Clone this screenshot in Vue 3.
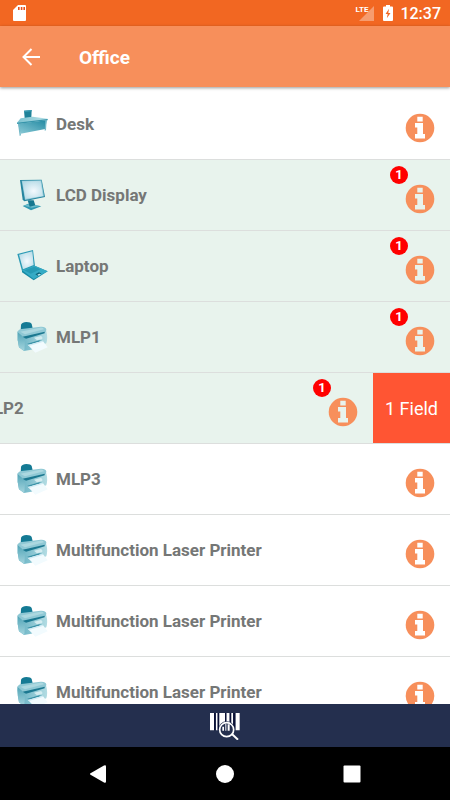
<template>
  <div class="screen">
    <!-- Status bar -->
    <div class="status-bar">
      <svg class="sd-icon" viewBox="0 0 13 16" aria-hidden="true">
        <path d="M5 0h7q1 0 1 1v14q0 1-1 1H1q-1 0-1-1V5z" fill="#fff" />
        <path d="M5 2h1.6v3H5zM7.8 2h1.6v3H7.8zM10.4 2H12v3h-1.6z" fill="#e8501c" />
      </svg>
      <div class="status-right">
        <div class="signal">
          <span class="lte">LTE</span>
          <svg viewBox="0 0 15 15" aria-hidden="true"><path d="M15 0v15H0z" fill="#fff" opacity=".35" /></svg>
        </div>
        <svg class="battery" viewBox="0 0 10 16" aria-hidden="true">
          <path d="M3 0h4v1.5h2q1 0 1 1V15q0 1-1 1H1q-1 0-1-1V2.5q0-1 1-1h2z" fill="#fff" />
          <path d="M6 3.8 2.6 9h2.1l-.9 4.2L7.5 7.9H5.3z" fill="#f26722" />
        </svg>
        <time class="clock">12:37</time>
      </div>
    </div>

    <!-- App bar -->
    <header class="app-bar">
      <button class="back" type="button" aria-label="Back">
        <svg viewBox="0 0 18 18"><path d="M9.5 1 1.5 9l8 8M1.5 9H18" fill="none" stroke="#fff" stroke-width="2" /></svg>
      </button>
      <h1>Office</h1>
    </header>

    <!-- Item list -->
    <ul class="list">
      <li v-for="item in items" :key="item.id" class="row" :class="{ changed: item.count }">
        <div class="row-content">
          <svg v-if="item.icon === 'desk'" class="thumb" viewBox="0 0 96 96" aria-hidden="true">
            <path d="M24 8 47 6 46 29 26 30z" fill="#1f8299" />
            <path d="M24 8 47 6v4L25 12z" fill="#3d9db3" />
            <path d="M3 44 14 31 50 26 95 32 93 37 4 48z" fill="url(#g-lid)" />
            <path d="M6 47 92 37 88 63 14 77z" fill="url(#g-front)" />
            <path d="M3 44 95 33v4L4 48z" fill="#3795ab" />
            <path d="M6 47h4l5 35-4 2zM88 37h4l-2 30-4 1z" fill="#74b9c8" />
          </svg>
          <svg v-else-if="item.icon === 'monitor'" class="thumb" viewBox="0 0 96 96" aria-hidden="true">
            <path d="M20 81 37 74 76 82 45 94z" fill="#2f98b0" />
            <path d="M24 80 40 75 72 81 47 86z" fill="#6dbccb" />
            <path d="M35 64h18l5 15-17 4z" fill="#16778f" />
            <path d="M12 3 77 2 87 54 25 67 20 62z" fill="#2685a0" />
            <path d="M17 5 76 4 84 52 27 63z" fill="#8cc8d6" />
            <path d="M19 7 74 6 81 51 28 60z" fill="url(#g-screen)" />
          </svg>
          <svg v-else-if="item.icon === 'laptop'" class="thumb" viewBox="0 0 96 96" aria-hidden="true">
            <path d="M4 12 51 0 57 47 18 63z" fill="#2a9ab5" />
            <path d="M9 14 49 4 53 45 21 58z" fill="url(#g-screen)" />
            <path d="M18 61 56 47 95 64 53 91 18 67z" fill="#158aa4" />
            <path d="M18 61 56 47 95 64 53 87z" fill="#35abc5" />
            <path d="M25 61 55 50 74 58 44 71z" fill="#259ab4" />
            <path d="M58 73 69 67 76 71 65 77z" fill="#0b6479" />
            <path d="M64 74 70 71 75 73 68 77z" fill="#bde6ed" />
          </svg>
          <svg v-else class="thumb" viewBox="0 0 96 96" aria-hidden="true">
            <path d="M14 29 15 11q4-8 16-8 14 0 16 6l4 17-24 8z" fill="#147a94" />
            <path d="M5 32 30 45 91 31q5 20 0 36L46 86 24 90 9 79q-6-24-4-47z" fill="url(#g-body)" />
            <path d="M5 32 28 46 25 90 9 79q-6-24-4-47z" fill="url(#g-side)" />
            <path d="M4 32Q8 25 17 24L74 17q15-1 17 8L90 32 22 48z" fill="#8fc8d4" />
            <path d="M13 32 72 20q10-1 12 5L27 40z" fill="#acd8e0" />
            <path d="M20 47 86 32v5L30 53z" fill="#1b7890" />
            <path d="M54 50 75 45q6 3 4 9L63 58z" fill="#d3ecf0" />
            <path d="M34 68 70 58 78 60 42 73z" fill="#3a93a8" />
            <path d="M36 72 80 59 95 79 58 95z" fill="#f2fbfe" />
            <path d="M36 72 80 59 82 62 39 75z" fill="#cfeaf3" />
          </svg>
          <span class="name">{{ item.name }}</span>
          <button class="info" type="button" :aria-label="'Info about ' + item.name">
            <svg viewBox="0 0 28 28">
              <circle cx="14" cy="14" r="14.3" fill="#f78f5b" />
              <path d="M11.3 2.8h5.4v4.600h-5.400zM9 9h8v11h2v4.500H9V20h2.300v-6.500H9z" class="info-glyph" />
            </svg>
            <span v-if="item.count" class="badge">{{ item.count }}</span>
          </button>
        </div>
        <button v-if="item.open" class="field-action" type="button">{{ item.count }} Field</button>
      </li>
    </ul>

    <!-- Scan bar -->
    <footer class="scan-bar">
      <button type="button" aria-label="Scan barcode">
        <svg viewBox="0 0 90 84">
          <path d="M0 3h12v52H0zM18 3h5v52h-5zM28 3h17v52H28zM49 3h10v52H49zM64 3h5v52h-5zM77 3h12v52H77z" fill="#fff" />
          <path d="M12 3h4v52h-4zM23 3h4v52h-4zM45 3h4v52h-4zM59 3h4v52h-4zM70 3h5v52h-5z" fill="#0b1136" />
          <circle cx="50" cy="53" r="25" fill="#242f4e" />
          <path d="M37 44h5v12h-5zM46 36h3v20h-3zM53 37h6v19h-6z" fill="#fff" />
          <circle cx="50" cy="53" r="21" fill="none" stroke="#fff" stroke-width="5" />
          <path d="M65 65 84 83" stroke="#fff" stroke-width="6" />
        </svg>
      </button>
    </footer>

    <!-- System navigation -->
    <nav class="system-nav">
      <button type="button" aria-label="Back">
        <svg viewBox="0 0 18 18"><path d="M1.5 8.3 15 .5q2-.8 2 1v15q0 1.800-2 1L1.500 9.700q-1-.7 0-1.400z" fill="#fff" /></svg>
      </button>
      <button type="button" aria-label="Home">
        <svg viewBox="0 0 18 18"><circle cx="9" cy="9" r="9" fill="#fff" /></svg>
      </button>
      <button type="button" aria-label="Recent apps">
        <svg viewBox="0 0 18 18"><rect x=".5" y=".5" width="17" height="17" rx="1" fill="#fff" /></svg>
      </button>
    </nav>

    <!-- Shared gradients -->
    <svg class="defs" width="0" height="0" aria-hidden="true">
      <defs>
        <linearGradient id="g-lid" x1="0" x2="1"><stop stop-color="#7cc3d0" /><stop offset="1" stop-color="#b5dfe6" /></linearGradient>
        <linearGradient id="g-front" x1="0" y1="1" x2="1" y2="0"><stop stop-color="#8ccbd7" /><stop offset="1" stop-color="#2289a2" /></linearGradient>
        <radialGradient id="g-screen" cx=".55" cy=".55" r=".65"><stop stop-color="#f4f9fd" /><stop offset="1" stop-color="#b4dae6" /></radialGradient>
        <linearGradient id="g-body" x1="0" x2="1"><stop stop-color="#62afc1" /><stop offset="1" stop-color="#b3dce3" /></linearGradient>
        <linearGradient id="g-side" x1="0" y1="0" x2="0" y2="1"><stop stop-color="#4fa3b6" /><stop offset="1" stop-color="#a5d5de" /></linearGradient>
      </defs>
    </svg>
  </div>
</template>

<script setup>
import { ref } from 'vue'

const items = ref([
  { id: 1, name: 'Desk', icon: 'desk', count: 0 },
  { id: 2, name: 'LCD Display', icon: 'monitor', count: 1 },
  { id: 3, name: 'Laptop', icon: 'laptop', count: 1 },
  { id: 4, name: 'MLP1', icon: 'printer', count: 1 },
  { id: 5, name: 'MLP2', icon: 'printer', count: 1, open: true },
  { id: 6, name: 'MLP3', icon: 'printer', count: 0 },
  { id: 7, name: 'Multifunction Laser Printer', icon: 'printer', count: 0 },
  { id: 8, name: 'Multifunction Laser Printer', icon: 'printer', count: 0 },
  { id: 9, name: 'Multifunction Laser Printer', icon: 'printer', count: 0 }
])
</script>

<style>
body {
  margin: 0;
}
</style>

<style scoped>
.screen {
  display: flex;
  flex-direction: column;
  height: 100vh;
  overflow: hidden;
  background: #fff;
  font-family: Roboto, sans-serif;
}
.screen svg {
  display: block;
}
button {
  padding: 0;
  border: none;
  background: none;
  font-family: inherit;
  cursor: pointer;
}
.status-bar {
  display: flex;
  flex: none;
  align-items: center;
  justify-content: space-between;
  height: 26px;
  padding: 0 9px 0 13px;
  background: #f26722;
  color: #fff;
}
.sd-icon {
  width: 13px;
  height: 16px;
}
.status-right {
  display: flex;
  align-items: center;
  gap: 7px;
}
.signal {
  display: flex;
  align-items: flex-start;
  margin-right: 2px;
}
.signal svg {
  width: 15px;
  height: 15px;
  margin-left: -9px;
}
.lte {
  font-size: 8px;
  font-weight: 700;
  line-height: 8px;
}
.battery {
  width: 10px;
  height: 16px;
}
.clock {
  padding-top: 2px;
  font-size: 16px;
  font-weight: 500;
  line-height: 24px;
}
.app-bar {
  display: flex;
  flex: none;
  align-items: center;
  gap: 39px;
  height: 61px;
  padding: 0 22px;
  background: #f78f5b;
  box-shadow: 0 1px 3px rgba(0, 0, 0, 0.4);
  z-index: 1;
}
.back svg {
  width: 18px;
  height: 18px;
}
h1 {
  margin: 0;
  padding-top: 2px;
  color: #fff;
  font-size: 19px;
  font-weight: 700;
  line-height: 24px;
}
.list {
  flex: 1;
  min-height: 0;
  margin: 0;
  padding: 2px 0 0;
  overflow: hidden;
  list-style: none;
}
.row {
  display: flex;
  justify-content: flex-end;
  box-sizing: border-box;
  height: 71px;
  overflow: hidden;
  border-bottom: 1px solid #dcdedd;
  background: #fff;
}
.row.changed {
  background: #e8f3ed;
}
.row-content {
  display: flex;
  flex: none;
  align-items: center;
  gap: 8px;
  box-sizing: border-box;
  width: 100%;
  padding: 0 16px;
}
.thumb {
  flex: none;
  width: 32px;
  height: 32px;
}
.name {
  flex: 1;
  color: #757776;
  font-size: 17px;
  font-weight: 700;
  line-height: 24px;
}
.info {
  position: relative;
  width: 28px;
  height: 28px;
  margin-top: 8px;
}
.info svg {
  width: 28px;
  height: 28px;
  overflow: visible;
}
.info-glyph {
  fill: #fff;
}
.changed .info-glyph {
  fill: #e8f3ed;
}
.badge {
  position: absolute;
  top: -19px;
  left: -16px;
  width: 18px;
  height: 18px;
  border-radius: 50%;
  background: #f00;
  color: #fff;
  font-size: 13px;
  font-weight: 700;
  line-height: 18px;
  text-align: center;
}
.field-action {
  flex: none;
  width: 77px;
  background: #ff5533;
  color: #fff;
  font-size: 18px;
}
.scan-bar {
  display: flex;
  flex: none;
  justify-content: center;
  height: 43px;
  background: #242f4e;
}
.scan-bar svg {
  width: 30px;
  height: 28px;
}
.system-nav {
  display: grid;
  flex: none;
  grid-template-columns: repeat(3, 1fr);
  height: 53px;
  padding: 0 35px;
  background: #000;
}
.system-nav svg {
  width: 18px;
  height: 18px;
  margin: 0 auto;
}
.defs {
  position: absolute;
}
</style>
